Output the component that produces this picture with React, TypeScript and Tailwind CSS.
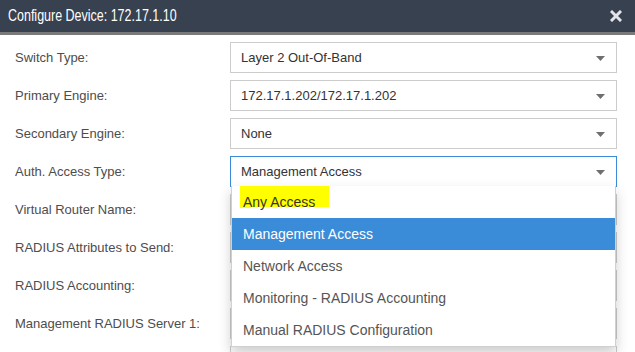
const rows = [
  { label: "Switch Type:", value: "Layer 2 Out-Of-Band" },
  { label: "Primary Engine:", value: "172.17.1.202/172.17.1.202" },
  { label: "Secondary Engine:", value: "None" },
  { label: "Auth. Access Type:", value: "Management Access", open: true },
  { label: "Virtual Router Name:", value: "" },
  { label: "RADIUS Attributes to Send:", value: "" },
  { label: "RADIUS Accounting:", value: "" },
  { label: "Management RADIUS Server 1:", value: "" },
  { label: "", value: "" },
];

const options = [
  "Any Access",
  "Management Access",
  "Network Access",
  "Monitoring - RADIUS Accounting",
  "Manual RADIUS Configuration",
];

function Caret() {
  return (
    <svg width="9" height="5" viewBox="0 0 9 5" className="absolute right-[11px] top-[13px]">
      <path d="M0 0h9L4.5 5z" fill="#6f6f6f" />
    </svg>
  );
}

function Dropdown() {
  return (
    <div className="absolute left-0 top-full z-10 w-full border border-[#d0d0d0] border-t-0 bg-white shadow-[0_6px_12px_rgba(0,0,0,0.2)]">
      {options.map((opt, i) => (
        <div
          key={opt}
          className={
            i === 1
              ? "relative flex h-[32px] items-center bg-[#3a8bd8] pl-[11px] text-[14px] text-white"
              : "relative flex h-[32px] items-center pl-[11px] text-[14px] text-[#555]"
          }
        >
          {i === 0 && (
            <>
              {/* highlighter mark over the first option */}
              <span className="absolute left-[8px] top-0 h-[21px] w-[89px] bg-[#ffff00]" />
              <span className="absolute left-[8px] top-[21px] h-[1px] w-[11px] bg-[#ffff00]" />
            </>
          )}
          <span className={i === 0 ? "relative text-[#333]" : "relative"}>{opt}</span>
        </div>
      ))}
    </div>
  );
}

export default function App() {
  return (
    <div className="relative h-[352px] w-[635px] overflow-hidden bg-white font-['Liberation_Sans',Arial,sans-serif]">
      <div className="flex h-[35px] items-center justify-between border-b-[3px] border-[#7a7a7a] bg-[#37414f] pl-2 pr-[13px]">
        <span className="inline-block origin-left scale-x-[0.78] whitespace-nowrap text-[16px] text-white">
          Configure Device: 172.17.1.10
        </span>
        <svg width="12" height="12" viewBox="0 0 12 12">
          <path d="M2 2l8 8M10 2l-8 8" stroke="#e2e4e8" strokeWidth="3" strokeLinecap="square" />
        </svg>
      </div>

      <div className="flex flex-col gap-[7px] pl-[15px] pr-[18px] pt-[7px]">
        {rows.map((row, i) => (
          <div key={i} className="flex h-[31px] items-center">
            <div className="w-[215px] text-[13px] text-[#4d4d4d]">{row.label}</div>
            <div
              className={
                row.open
                  ? "relative flex h-[31px] w-[387px] items-center border border-[#3a8bd8] pl-[10px] text-[13px] text-[#333]"
                  : "relative flex h-[31px] w-[387px] items-center border border-[#cccccc] pl-[10px] text-[13px] text-[#333]"
              }
            >
              {row.value}
              {i < 4 && <Caret />}
              {row.open && <Dropdown />}
            </div>
          </div>
        ))}
      </div>
    </div>
  );
}
